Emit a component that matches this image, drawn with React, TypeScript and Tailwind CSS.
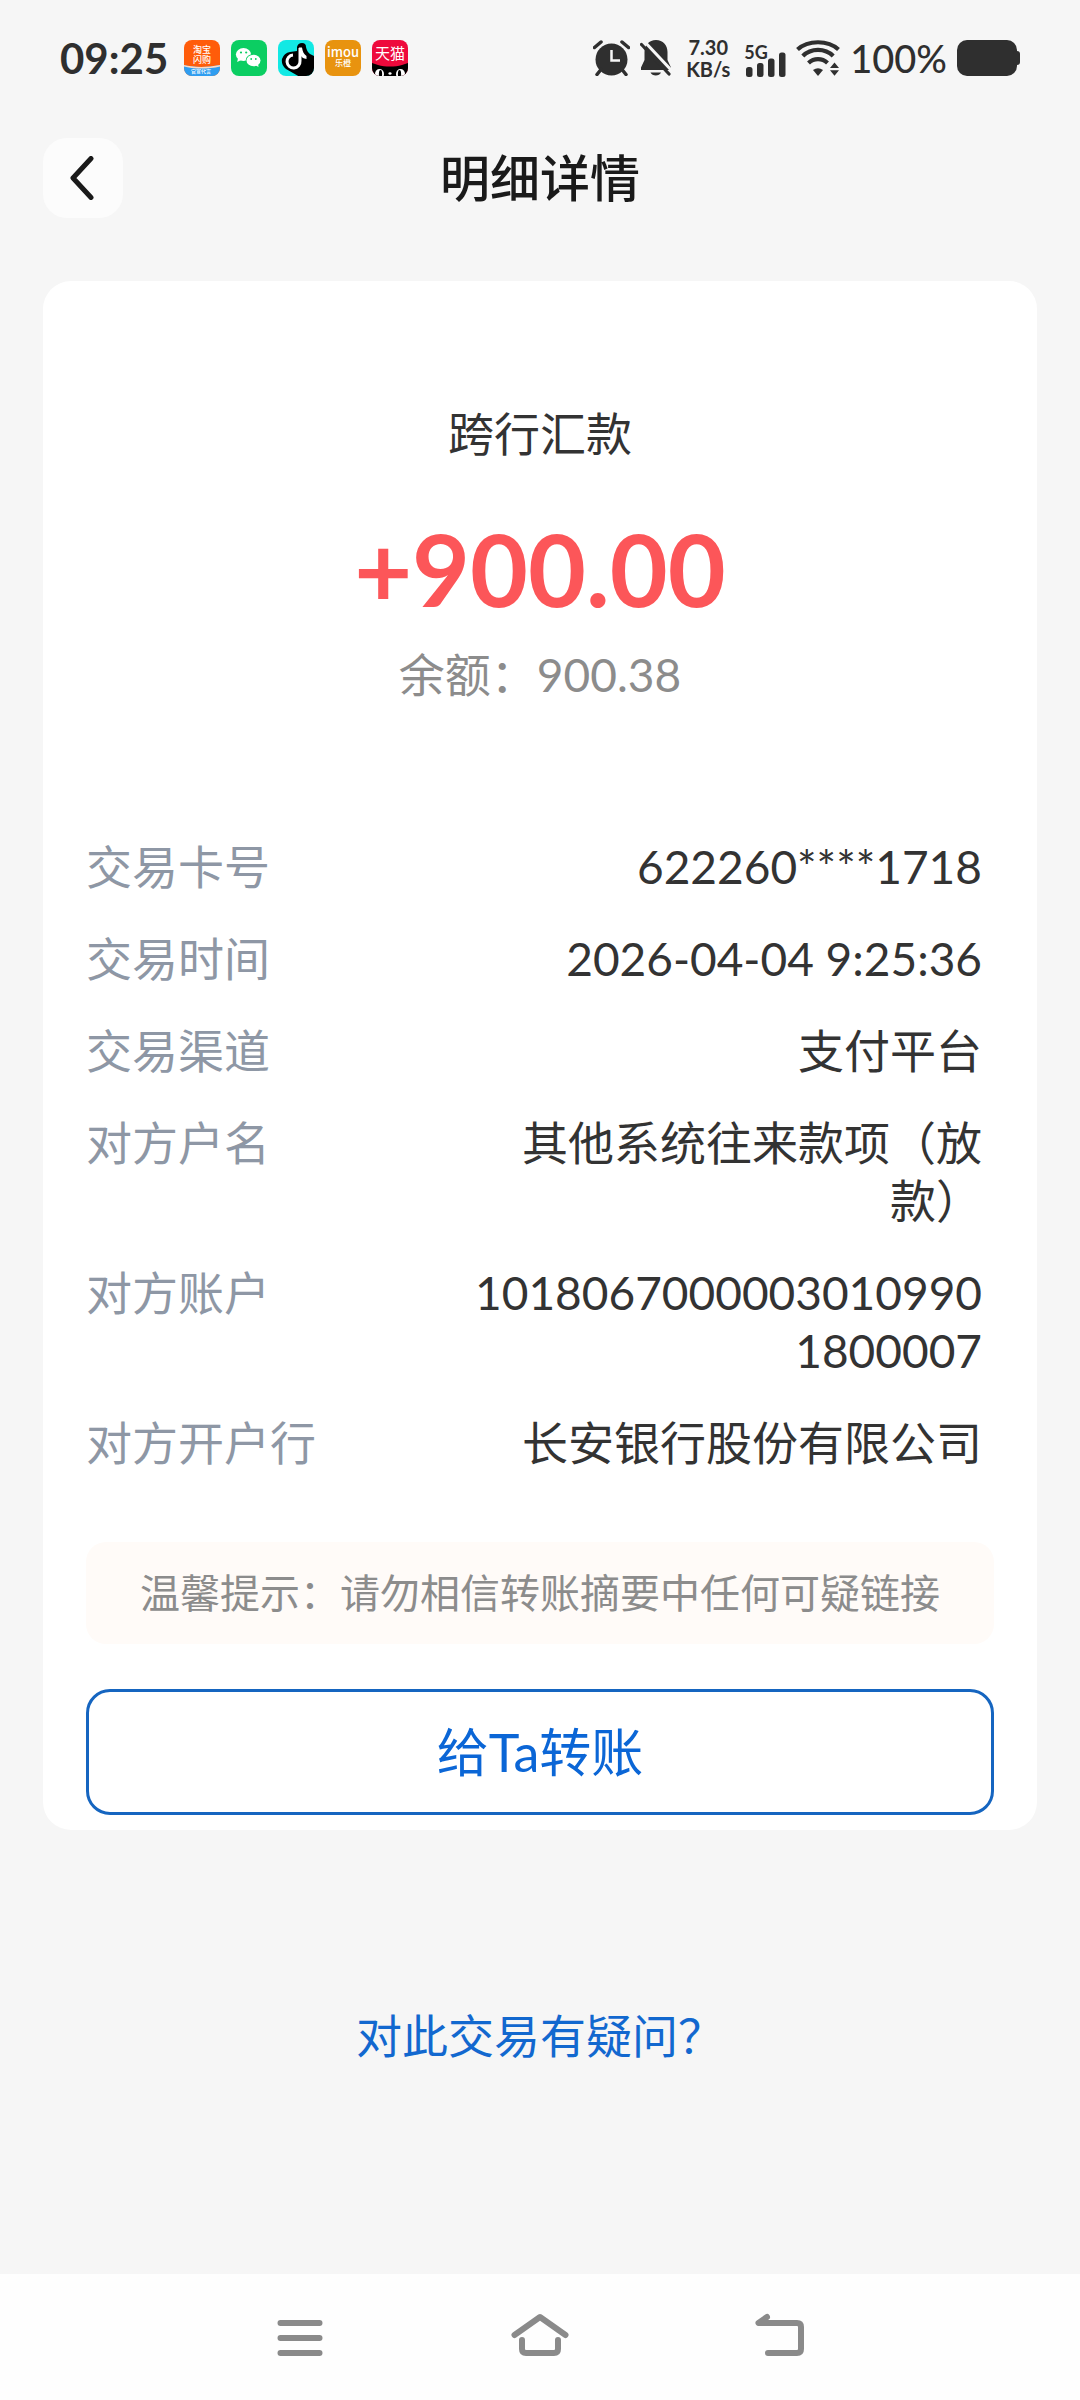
import type { ReactNode } from "react"

const details = [
  { label: "交易卡号", value: "622260****1718" },
  { label: "交易时间", value: "2026-04-04 9:25:36" },
  { label: "交易渠道", value: "支付平台" },
  { label: "对方户名", value: "其他系统往来款项（放款）" },
  { label: "对方账户", value: "10180670000030109901800007" },
  { label: "对方开户行", value: "长安银行股份有限公司" },
]

function AppBadge({ id, children }: { id: string; children: ReactNode }) {
  return (
    <svg className="size-9" viewBox="0 0 36 36" aria-hidden="true">
      <clipPath id={id}>
        <rect width="36" height="36" rx="8" />
      </clipPath>
      <g clipPath={`url(#${id})`}>{children}</g>
    </svg>
  )
}

function NotificationIcons() {
  return (
    <div className="flex items-center gap-[11px] font-['Noto_Sans_CJK_SC',sans-serif]">
      <AppBadge id="taobao">
        <rect width="36" height="36" fill="#ff5c0a" />
        <path d="M0 25c7 2 22 3 36 0v11H0z" fill="#2f9df0" />
        <path d="M0 25c7 2 22 3 36 0v1.5c-12 3-28 2.5-36 0z" fill="#ffd9c2" />
        <text fontSize="9" fontWeight="500" fill="#fff" textAnchor="middle">
          <tspan x="18" y="13">淘宝</tspan>
          <tspan x="18" y="23">闪购</tspan>
          <tspan x="17" y="33" fontSize="5">官宣代言</tspan>
        </text>
      </AppBadge>
      <AppBadge id="wechat">
        <rect width="36" height="36" fill="#0bce62" />
        <ellipse cx="12.5" cy="14.5" rx="7.6" ry="6.5" fill="#fff" />
        <path d="M7 18l-.8 4 4-2z" fill="#fff" />
        <ellipse cx="22.5" cy="20.5" rx="7.8" ry="6.6" fill="#0bce62" />
        <ellipse cx="22.5" cy="20.5" rx="7" ry="5.8" fill="#fff" />
        <path d="M24 25l3.5 2-.5-4z" fill="#fff" />
        <g fill="#0bce62">
          <circle cx="10" cy="12.5" r="1.1" />
          <circle cx="15.2" cy="12.5" r="1.1" />
          <circle cx="20.2" cy="19" r=".9" />
          <circle cx="24.8" cy="19" r=".9" />
        </g>
      </AppBadge>
      <AppBadge id="douyin">
        <rect width="36" height="36" fill="#12e9e4" />
        <path d="M19 7q1-4 5-4 4 0 4 4 1 5 4 7l6 3v20H22L8 29q-5-4-4-10 2-6 8-7l7-1z" fill="#000" />
        <path d="M22 8v13a6.5 6.5 0 1 1-7-6" fill="none" stroke="#fff" strokeWidth="3" />
        <path d="M21 7.500h3c.5 4 2 7 4.500 8.500v3c-3-.5-4.500-1.500-5.500-3z" fill="#fff" />
      </AppBadge>
      <AppBadge id="imou">
        <rect width="36" height="36" fill="#e8930f" />
        <text x="18" y="17" fontSize="13" fontWeight="500" fill="#fff" textAnchor="middle">
          imou
          <tspan x="18" y="26" fontSize="8">乐橙</tspan>
        </text>
      </AppBadge>
      <AppBadge id="tmall">
        <rect width="36" height="36" fill="#ee0a3c" />
        <path d="M0 23l6 2c7 2 17 2 24 0l6-2v13H0z" fill="#000" />
        <ellipse cx="7.5" cy="34" rx="4.5" ry="5" fill="#fff" />
        <ellipse cx="28.5" cy="34" rx="4.5" ry="5" fill="#fff" />
        <ellipse cx="8.5" cy="34" rx="1.6" ry="4" fill="#000" />
        <ellipse cx="27.5" cy="34" rx="1.6" ry="4" fill="#000" />
        <ellipse cx="18" cy="33.5" rx="1.6" ry="1.2" fill="#fff" />
        <text x="18" y="19" fontSize="15" fill="#fff" textAnchor="middle">天猫</text>
      </AppBadge>
    </div>
  )
}

function AlarmIcon() {
  return (
    <svg className="h-9 w-[37px]" viewBox="0 0 37 36" fill="none" stroke="#2f2f2f" strokeWidth="3.5" aria-hidden="true">
      <circle cx="18.5" cy="19.5" r="16" fill="#2f2f2f" stroke="none" />
      <path d="M1.5 7.5L8 2M35.5 7.5L29 2M8 29.5L4 34.5M29 29.5L33 34.5" strokeLinecap="round" />
      <path d="M18.5 10v10.5H27" stroke="#f7f7f7" strokeWidth="2.5" />
    </svg>
  )
}

function MutedBellIcon() {
  return (
    <svg className="h-9 w-8" viewBox="0 0 32 36" fill="#2f2f2f" aria-hidden="true">
      <path d="M16 0C9 0 4.500 5 4.500 12v8L1 27.500V30h30v-2.500L27.500 20v-8C27.500 5 23 0 16 0z" />
      <path d="M10.500 32.500h10.500C19.500 36.500 12 36.500 10.500 32.500z" />
      <path d="M3 0L32 31" stroke="#f7f7f7" strokeWidth="3" />
      <path d="M1.500 4.500L29 34" stroke="#2f2f2f" strokeWidth="3.2" strokeLinecap="round" />
    </svg>
  )
}

function SignalIcon() {
  return (
    <svg className="h-[25px] w-10" viewBox="0 0 40 25" fill="#2f2f2f" aria-hidden="true">
      <rect x="0" y="15" width="6.5" height="10" rx="2.5" />
      <rect x="11" y="11" width="6.5" height="14" rx="2.5" />
      <rect x="22" y="6.5" width="6.5" height="18.5" rx="2.5" />
      <rect x="33" y="0.5" width="6.5" height="24.5" rx="2.5" />
    </svg>
  )
}

function WifiIcon() {
  return (
    <svg className="h-9 w-11" viewBox="0 0 44 36" fill="none" stroke="#2f2f2f" strokeWidth="4.2" aria-hidden="true">
      <path d="M1.5 9.5C12-.2 32-.2 42.5 9.5" />
      <path d="M6.8 16C15 7.8 29 7.8 37.2 16" />
      <path d="M12.5 23C18 17.8 26 17.8 31.5 23" />
      <path d="M17 30q5-3.5 10 0l-5 6z" fill="#2f2f2f" stroke="none" />
      <path d="M34 28l4.500-5.500L43 28zM34 30.200h9l-4.500 5.500z" fill="#2f2f2f" stroke="none" />
    </svg>
  )
}

function StatusBar() {
  return (
    <div className="flex h-[116px] items-center justify-between px-[60px] text-[#2f2f2f]">
      <div className="flex items-center gap-4">
        <time className="text-[42px] leading-none font-bold">09:25</time>
        <NotificationIcons />
      </div>
      <div className="flex items-center gap-[10px]">
        <AlarmIcon />
        <MutedBellIcon />
        <div className="mx-1 flex w-11 flex-col items-center text-[20px] leading-[22px] font-bold">
          <span>7.30</span>
          <span>KB/s</span>
        </div>
        <div className="flex w-[42px] flex-col items-end">
          <span className="-mb-3 self-start text-[18px] leading-6 font-bold">5G</span>
          <SignalIcon />
        </div>
        <WifiIcon />
        <span className="text-[38px] leading-none font-medium">100%</span>
        <svg className="h-9 w-[63px]" viewBox="0 0 63 36" fill="#2f2f2f" aria-hidden="true">
          <rect width="60" height="36" rx="10" />
          <rect x="56" y="11" width="7" height="14" rx="3" />
        </svg>
      </div>
    </div>
  )
}

function Header() {
  return (
    <header className="grid grid-cols-[80px_1fr_80px] items-center px-[43px] pt-[22px]">
      <button type="button" aria-label="返回" className="flex size-20 items-center justify-center rounded-3xl bg-[#fcfcfc]">
        <svg className="h-11 w-7" viewBox="0 0 28 44" fill="none" stroke="#1a1a1a" strokeWidth="5" strokeLinecap="round" strokeLinejoin="round">
          <path d="M22 2.5L4 22L22 41.5" />
        </svg>
      </button>
      <h1 className="text-center text-[50px] leading-none font-medium text-[#1a1a1a]">明细详情</h1>
    </header>
  )
}

function SystemNav() {
  return (
    <nav className="bg-[#fefefe]">
      <div className="mx-auto grid h-[126px] w-2/3 grid-cols-3 place-items-center pb-1">
        <button type="button" aria-label="最近任务">
          <svg className="h-11 w-[60px]" viewBox="0 0 60 44" stroke="#8a8a8a" strokeWidth="6" strokeLinecap="round">
            <path d="M10.5 10h39M10.5 25h39M10.5 40h39" />
          </svg>
        </button>
        <button type="button" aria-label="主屏幕">
          <svg className="h-11 w-[60px]" viewBox="0 0 60 44" fill="none" stroke="#8a8a8a" strokeWidth="6" strokeLinecap="round" strokeLinejoin="round">
            <path d="M4.5 22L30 4L55.5 22M12 27v9q0 4 4 4h28q4 0 4-4v-9" />
          </svg>
        </button>
        <button type="button" aria-label="返回上一页">
          <svg className="h-11 w-[60px]" viewBox="0 0 60 44" fill="none" stroke="#8a8a8a" strokeWidth="6" strokeLinecap="round" strokeLinejoin="round">
            <path d="M17 4L8.5 10H47q4 0 4 4v22q0 4-4 4H18" />
          </svg>
        </button>
      </div>
    </nav>
  )
}

export default function App() {
  return (
    <div className="flex min-h-screen flex-col bg-[#f6f6f6] font-['Lato','Noto_Sans_CJK_SC',sans-serif] text-[#333333]" lang="zh-CN">
      <StatusBar />
      <Header />

      <main className="flex-1">
        <section className="mx-[43px] mt-[63px] rounded-[28px] bg-white px-[43px] pt-[123px] pb-[15px]">
          {/* Amount summary */}
          <div className="text-center">
            <h2 className="text-[46px] leading-[60px]">跨行汇款</h2>
            <p className="mt-12 text-[100px] leading-[112px] font-bold text-[#fc5659]">+900.00</p>
            <p className="mt-[22px] text-[46px] leading-[58px] text-[#8c8c8c]">余额：900.38</p>
          </div>

          {/* Transaction details */}
          <dl className="mt-[134px] flex flex-col gap-[34px] pr-3 text-[46px] leading-[58px]">
            {details.map((item) => (
              <div key={item.label} className="flex justify-between">
                <dt className="text-[#8e97a5]">{item.label}</dt>
                <dd className="max-w-[520px] text-right break-all">{item.value}</dd>
              </div>
            ))}
          </dl>

          <p className="mt-[70px] rounded-[20px] bg-[#fffbf8] py-[21px] text-center text-[40px] leading-[60px] text-[#8c8c8c]">
            温馨提示：请勿相信转账摘要中任何可疑链接
          </p>
          <button type="button" className="mt-[45px] h-[126px] w-full rounded-3xl border-3 border-[#1565c0] text-[52px] text-[#0b66d6]">
            给Ta转账
          </button>
        </section>

        <div className="mt-[176px] text-center">
          <a href="#question" className="text-[46px] leading-[60px] text-[#1268cf]">
            对此交易有疑问？
          </a>
        </div>
      </main>

      <SystemNav />
    </div>
  )
}
